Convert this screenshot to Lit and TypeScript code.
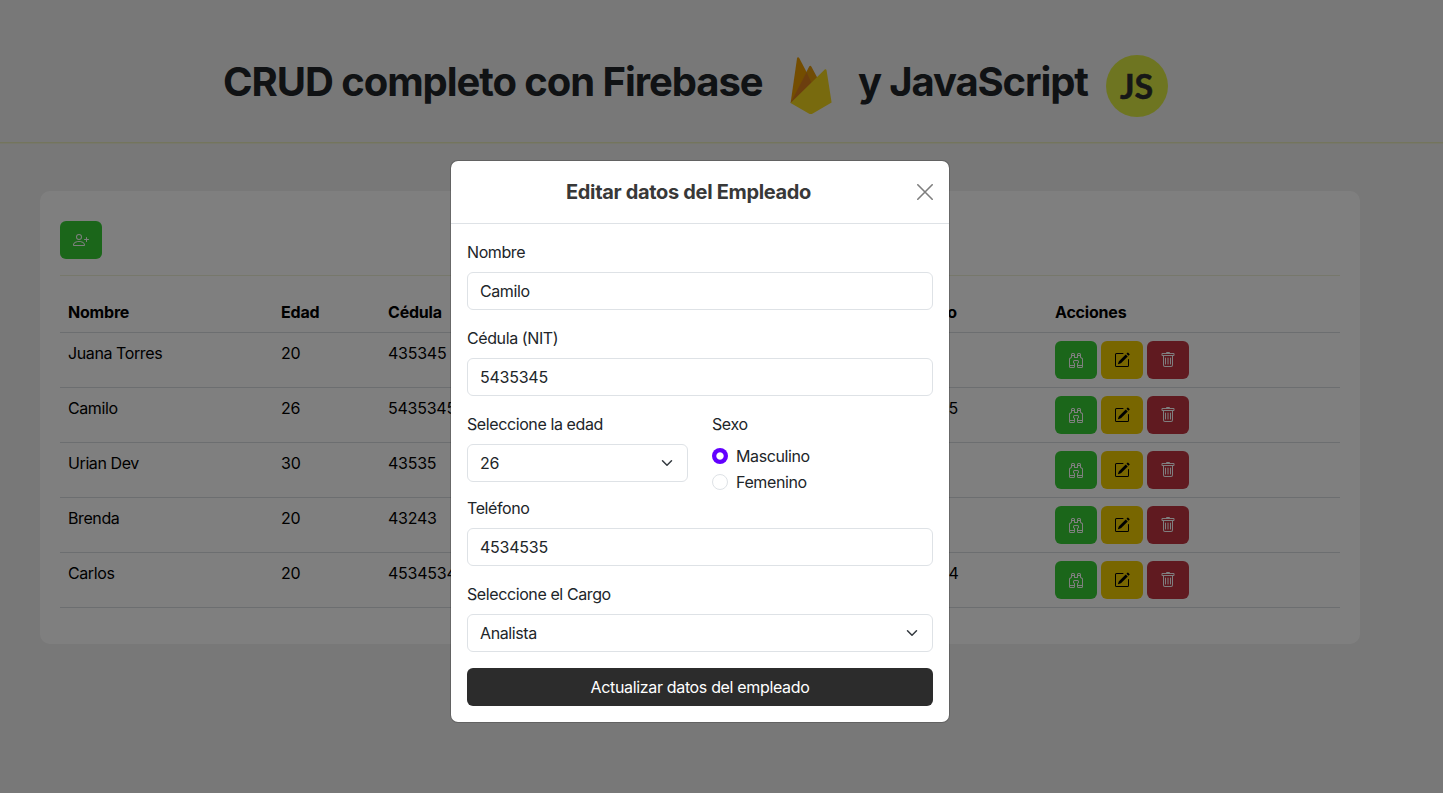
import { LitElement, html, css, svg } from "lit";
import { customElement } from "lit/decorators.js";

const ICONS: Record<string, string[]> = {
  add: [
    "M6 8a3 3 0 1 0 0-6 3 3 0 0 0 0 6m2-3a2 2 0 1 1-4 0 2 2 0 0 1 4 0m4 8c0 1-1 1-1 1H1s-1 0-1-1 1-4 6-4 6 3 6 4m-1-.004c-.001-.246-.154-.986-.832-1.664C9.516 10.68 8.289 10 6 10s-3.516.68-4.168 1.332c-.678.678-.83 1.418-.832 1.664z",
    "M13.5 5a.5.5 0 0 1 .5.5V7h1.5a.5.5 0 0 1 0 1H14v1.5a.5.5 0 0 1-1 0V8h-1.5a.5.5 0 0 1 0-1H13V5.5a.5.5 0 0 1 .5-.5",
  ],
  view: [
    "M3 2.5A1.5 1.5 0 0 1 4.5 1h1A1.5 1.5 0 0 1 7 2.5V5h2V2.5A1.5 1.5 0 0 1 10.5 1h1A1.5 1.5 0 0 1 13 2.5v2.382a.5.5 0 0 0 .276.447l.895.447A1.5 1.5 0 0 1 15 7.118V14.5a1.5 1.5 0 0 1-1.5 1.5h-3A1.5 1.5 0 0 1 9 14.5v-3a.5.5 0 0 1 .146-.354l.854-.853V9.5a.5.5 0 0 0-.5-.5h-3a.5.5 0 0 0-.5.5v.793l.854.853A.5.5 0 0 1 7 11.5v3A1.5 1.5 0 0 1 5.5 16h-3A1.5 1.5 0 0 1 1 14.5V7.118a1.5 1.5 0 0 1 .83-1.342l.894-.447A.5.5 0 0 0 3 4.882zM4.5 2a.5.5 0 0 0-.5.5V3h2v-.5a.5.5 0 0 0-.5-.5zM6 4H4v.882a1.5 1.5 0 0 1-.83 1.342l-.894.447A.5.5 0 0 0 2 7.118V13h4v-1.293l-.854-.853A.5.5 0 0 1 5 10.5v-1A1.5 1.5 0 0 1 6.5 8h3A1.5 1.5 0 0 1 11 9.5v1a.5.5 0 0 1-.146.354l-.854.853V13h4V7.118a.5.5 0 0 0-.276-.447l-.895-.447A1.5 1.5 0 0 1 12 4.882V4h-2v1.5a.5.5 0 0 1-.5.5h-3a.5.5 0 0 1-.5-.5zm4-1h2v-.5a.5.5 0 0 0-.5-.5h-1a.5.5 0 0 0-.5.5zm4 11h-4v.5a.5.5 0 0 0 .5.5h3a.5.5 0 0 0 .5-.5zm-8 0H2v.5a.5.5 0 0 0 .5.5h3a.5.5 0 0 0 .5-.5z",
  ],
  edit: [
    "M15.502 1.94a.5.5 0 0 1 0 .706L14.459 3.69l-2-2L13.502.646a.5.5 0 0 1 .707 0l1.293 1.293zm-1.75 2.456-2-2L4.939 9.21a.5.5 0 0 0-.121.196l-.805 2.414a.25.25 0 0 0 .316.316l2.414-.805a.5.5 0 0 0 .196-.12l6.813-6.814z",
    "M1 13.5A1.5 1.5 0 0 0 2.5 15h11a1.5 1.5 0 0 0 1.5-1.5v-6a.5.5 0 0 0-1 0v6a.5.5 0 0 1-.5.5h-11a.5.5 0 0 1-.5-.5v-11a.5.5 0 0 1 .5-.5H9a.5.5 0 0 0 0-1H2.5A1.5 1.5 0 0 0 1 2.5z",
  ],
  remove: [
    "M5.5 5.5A.5.5 0 0 1 6 6v6a.5.5 0 0 1-1 0V6a.5.5 0 0 1 .5-.5m2.5 0a.5.5 0 0 1 .5.5v6a.5.5 0 0 1-1 0V6a.5.5 0 0 1 .5-.5m3 .5a.5.5 0 0 0-1 0v6a.5.5 0 0 0 1 0z",
    "M14.5 3a1 1 0 0 1-1 1H13v9a2 2 0 0 1-2 2H5a2 2 0 0 1-2-2V4h-.5a1 1 0 0 1-1-1V2a1 1 0 0 1 1-1H6a1 1 0 0 1 1-1h2a1 1 0 0 1 1 1h3.500a1 1 0 0 1 1 1zM4.118 4 4 4.059V13a1 1 0 0 0 1 1h6a1 1 0 0 0 1-1V4.059L11.882 4zM2.500 3h11V2h-11z",
  ],
};

const icon = (name: string) => html`<svg class="icon" viewBox="0 0 16 16" fill="currentColor">
  ${ICONS[name].map((d) => svg`<path fill-rule="evenodd" d=${d}></path>`)}
</svg>`;

const EMPLOYEES = [
  ["Juana Torres", "20", "435345", "Femenino", "Analista", "43534"],
  ["Camilo", "26", "5435345", "Masculino", "Analista", "4534535"],
  ["Urian Dev", "30", "43535", "Masculino", "Analista", "43534"],
  ["Brenda", "20", "43243", "Femenino", "Analista", "43242"],
  ["Carlos", "20", "4534534", "Masculino", "Analista", "4534534"],
];

@customElement("edit-dialog")
class EditDialog extends LitElement {
  static styles = css`
    :host { display: block; width: 498px; }
    * { box-sizing: border-box; }
    .content {
      background: #fff; background-clip: padding-box;
      border: 1px solid rgba(0, 0, 0, 0.175); border-radius: 8px;
      width: 500px; color: #212529;
    }
    .head {
      display: flex; align-items: center; height: 63px;
      border-bottom: 1px solid #dee2e6; padding: 0 16px;
    }
    .title {
      flex: 1; margin: 0; text-align: center; padding-right: 7px;
      font-size: 20px; line-height: 30px; font-weight: 700; color: #383838;
      letter-spacing: -0.33px;
    }
    .close { width: 16px; height: 16px; display: block; opacity: 0.5; }
    .body { padding: 16px; }
    .label { display: block; line-height: 24px; margin-bottom: 8px; }
    .control {
      display: flex; align-items: center; justify-content: space-between;
      height: 38px; border: 1px solid #dee2e6; border-radius: 6px;
      padding: 0 12px; margin-bottom: 16px;
    }
    .number { letter-spacing: -0.25px; }
    .chevron { width: 16px; height: 12px; }
    .columns { display: grid; grid-template-columns: 221px 221px; column-gap: 24px; height: 84px; }
    .option { display: flex; align-items: center; gap: 8px; height: 24px; margin-bottom: 2px; }
    .radio { width: 16px; height: 16px; border: 1px solid #dee2e6; border-radius: 50%; }
    .radio.on {
      border: 0;
      background: radial-gradient(circle, #fff 3.2px, #6200ff 4.1px);
    }
    .submit {
      display: block; width: 100%; height: 38px; border: 0; border-radius: 6px;
      background: #2c2c2c; color: #fff; font: inherit; letter-spacing: -0.34px;
    }
  `;

  private chevron() {
    return html`<svg class="chevron" viewBox="0 0 16 16">
      <path d="m2 5 6 6 6-6" fill="none" stroke="#343a40" stroke-width="2" stroke-linecap="round" stroke-linejoin="round"></path>
    </svg>`;
  }

  render() {
    return html`<div class="content">
      <div class="head">
        <h1 class="title">Editar datos del Empleado</h1>
        <svg class="close" viewBox="0 0 16 16">
          <path d="M.8.8 15.200 15.200M15.200.8.8 15.200" stroke="#000" stroke-width="1.600" stroke-linecap="round"></path>
        </svg>
      </div>
      <div class="body">
        <label class="label">Nombre</label>
        <div class="control">Camilo</div>
        <label class="label">Cédula (NIT)</label>
        <div class="control number">5435345</div>
        <div class="columns">
          <div>
            <label class="label">Seleccione la edad</label>
            <div class="control number">26 ${this.chevron()}</div>
          </div>
          <div>
            <label class="label">Sexo</label>
            <div class="option"><span class="radio on"></span>Masculino</div>
            <div class="option"><span class="radio"></span>Femenino</div>
          </div>
        </div>
        <label class="label">Teléfono</label>
        <div class="control number">4534535</div>
        <label class="label">Seleccione el Cargo</label>
        <div class="control">Analista ${this.chevron()}</div>
        <button class="submit">Actualizar datos del empleado</button>
      </div>
    </div>`;
  }
}

@customElement("app-root")
class AppRoot extends LitElement {
  static styles = css`
    :host {
      display: block; position: relative; height: 793px; overflow: hidden;
      background: #f0f0f0; color: #212529;
      font: 400 16px/24px Inter, "Liberation Sans", sans-serif;
      letter-spacing: -0.4px;
    }
    * { box-sizing: border-box; }
    .banner {
      display: flex; justify-content: flex-start; padding: 50px 0 0 223px;
      height: 143px; border-bottom: 1px solid #e9ebbb; box-shadow: 0 1px #edeed8;
    }
    .heading {
      display: flex; margin: 0; font-size: 40px; line-height: 64px; font-weight: 700;
      letter-spacing: -1.06px; white-space: nowrap;
    }
    .word { display: block; }
    .word.first { width: 567px; }
    .word.second { width: 248px; letter-spacing: -1.13px; }
    .firebase { width: 42px; height: 58px; margin: 7px 26px 0 0; }
    .js { width: 63px; height: 63px; margin-top: 4px; }
    .js-text { font: 700 34px Lato, sans-serif; letter-spacing: 0; }
    .card {
      width: 1320px; height: 453px; margin: 48px 0 0 40px; padding: 30px 20px 20px;
      background: #fff; border-radius: 10px;
    }
    .btn {
      display: inline-flex; align-items: center; justify-content: center;
      width: 42px; height: 38px; border: 0; border-radius: 6px; padding: 0; color: #fff;
    }
    .icon { width: 16px; height: 16px; display: block; }
    .green { background: #37cd35; }
    .yellow { background: #f0cd00; color: #000; }
    .red { background: #c03540; }
    .toolbar { display: flex; height: 55px; padding-bottom: 16px; border-bottom: 1px solid #eff0d6; }
    .table {
      width: 1280px; margin-top: 16px; border-collapse: collapse; table-layout: fixed; color: #000;
    }
    .table th, .table td {
      padding: 8px; text-align: left; vertical-align: top; border-bottom: 1px solid #d8dce0;
    }
    .table th { font-weight: 700; letter-spacing: -0.2px; }
    .table .number { letter-spacing: -0.25px; }
    .name-col { width: 213px; }
    .age-col { width: 107px; }
    .id-col { width: 160px; }
    .sex-col { width: 171px; }
    .role-col { width: 171px; }
    .phone-col { width: 165px; }
    .actions { display: flex; gap: 4px; }
    .backdrop {
      position: absolute; inset: 0; background: rgba(0, 0, 0, 0.5);
      padding: 160px 0 0 450px;
    }
  `;

  render() {
    return html`
      <header class="banner">
        <h1 class="heading">
          <span class="word first">CRUD completo con Firebase</span>
          <svg class="firebase" viewBox="0 0 42 58">
            <path d="M.6 46 7 1.400C7.200.1 8.600 0 9.200 1L26 33z" fill="#e89a00"></path>
            <path d="M.6 46 19.200 9.400c.5-1 1.600-1 2.100 0L28 22z" fill="#e0980c"></path>
            <path d="M.6 46 16.600 15.200 22 27z" fill="#d97c1c"></path>
            <path d="M.6 46 34.500 12.800c.8-.8 1.900-.5 2.100.6L41.600 45.500 22.800 56.400c-1.400.8-2.700.8-4 0z" fill="#f0d41c"></path>
          </svg>
          <span class="word second">y JavaScript</span>
          <svg class="js" viewBox="0 0 63 63">
            <circle cx="31" cy="32" r="31" fill="#dcea42"></circle>
            <text class="js-text" x="14" y="44.500" fill="#2d2e2e" stroke="#2d2e2e" stroke-width="0.500">JS</text>
          </svg>
        </h1>
      </header>
      <section class="card">
        <div class="toolbar"><button class="btn green">${icon("add")}</button></div>
        <table class="table">
          <colgroup>
            <col class="name-col" /><col class="age-col" /><col class="id-col" />
            <col class="sex-col" /><col class="role-col" /><col class="phone-col" /><col />
          </colgroup>
          <thead><tr>
            <th>Nombre</th><th>Edad</th><th>Cédula</th><th>Sexo</th><th>Cargo</th><th>Teléfono</th><th>Acciones</th>
          </tr></thead>
          <tbody>
            ${EMPLOYEES.map(([name, age, id, sex, role, phone]) => html`<tr>
              <td>${name}</td><td class="number">${age}</td><td class="number">${id}</td>
              <td>${sex}</td><td>${role}</td><td class="number">${phone}</td>
              <td><div class="actions">
                <button class="btn green">${icon("view")}</button>
                <button class="btn yellow">${icon("edit")}</button>
                <button class="btn red">${icon("remove")}</button>
              </div></td>
            </tr>`)}
          </tbody>
        </table>
      </section>
      <div class="backdrop"><edit-dialog></edit-dialog></div>
    `;
  }
}
